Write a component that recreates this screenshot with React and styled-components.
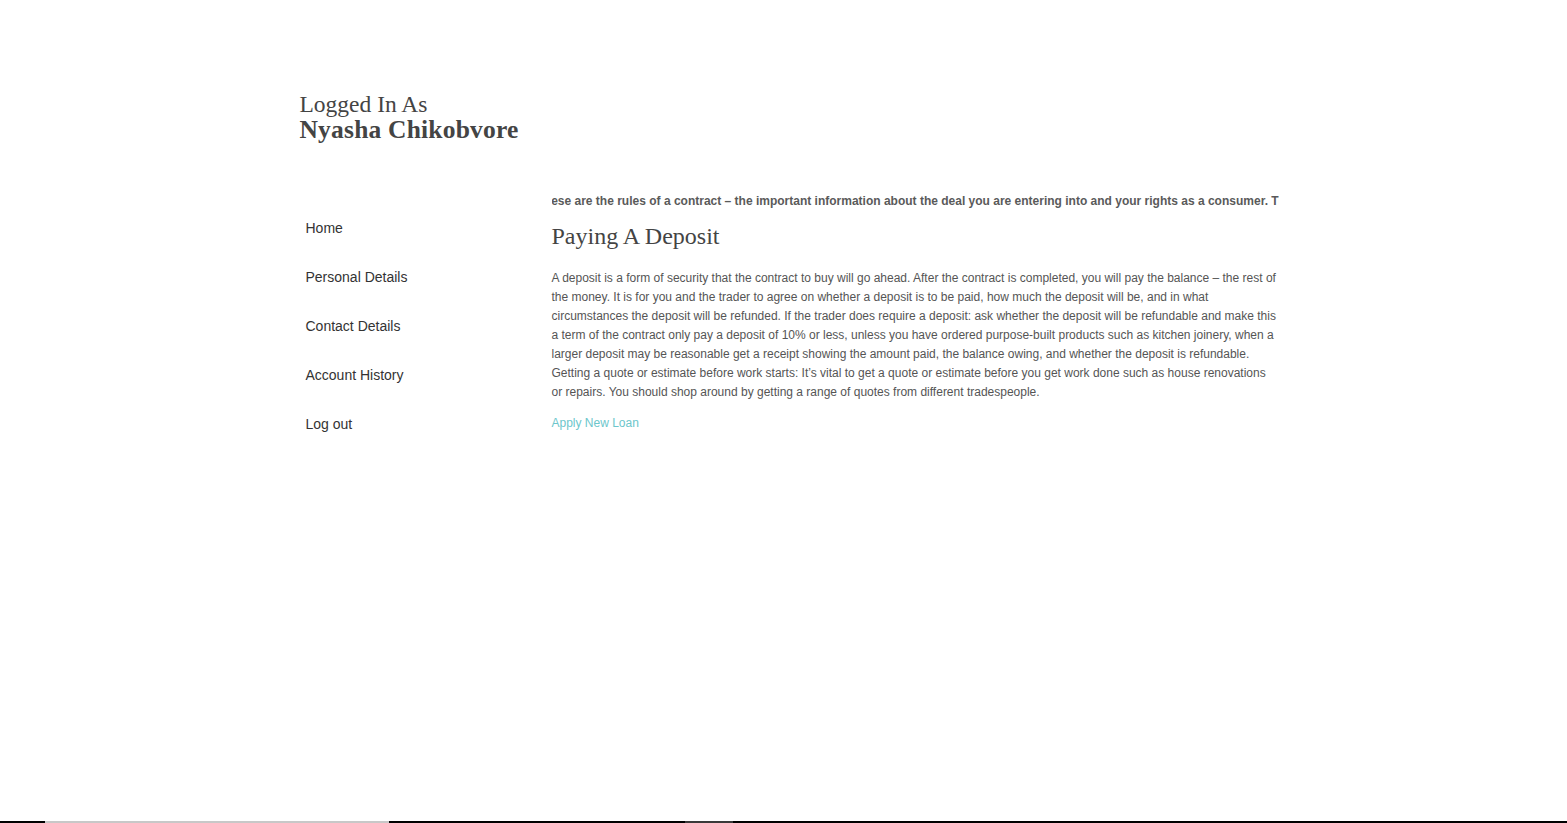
import React from "react";
import styled, { createGlobalStyle } from "styled-components";

const GlobalStyle = createGlobalStyle`
  html, body {
    margin: 0;
    padding: 0;
    background: #fff;
  }
  body {
    font-family: "Liberation Sans", Arial, sans-serif;
    color: #555;
  }
`;

const Page = styled.div`
  min-height: 100vh;
  display: flex;
  flex-direction: column;
`;

const Wrapper = styled.div`
  flex: 1;
  width: 990px;
  margin: 0 auto;
  padding: 92px 0 0 11px;
  box-sizing: border-box;
`;

const Greeting = styled.div`
  font-family: Georgia, "Liberation Serif", serif;
  color: #444;
  font-size: 23.5px;
  line-height: 25px;
  height: 100px;
  span {
    display: block;
  }
  strong {
    display: block;
    font-size: 25.5px;
    font-weight: 700;
    letter-spacing: 0.2px;
  }
`;

const Body = styled.div`
  display: flex;
`;

const Sidebar = styled.ul`
  list-style: none;
  margin: 0;
  padding: 11px 0 0 6px;
  width: 246px;
  flex-shrink: 0;
`;

const NavItem = styled.li`
  height: 49px;
  line-height: 49px;
  a {
    font-size: 14px;
    color: #333;
    text-decoration: none;
  }
`;

const Content = styled.div`
  flex: 1;
  min-width: 0;
`;

const Ticker = styled.div`
  overflow: hidden;
  white-space: nowrap;
  font-size: 12px;
  line-height: 18px;
  font-weight: 700;
  color: #5a5a5a;
  span {
    display: inline-block;
    margin-left: -15px;
  }
`;

const Title = styled.h2`
  font-family: Georgia, "Liberation Serif", serif;
  font-weight: 400;
  color: #444;
  font-size: 24px;
  line-height: 26px;
  margin: 13px 0 20px;
`;

const Text = styled.p`
  font-size: 12px;
  line-height: 19px;
  margin: 0 0 11px;
  color: #555;
`;

const LoanLink = styled.a`
  display: block;
  font-size: 12px;
  line-height: 20px;
  color: #6cc6cb;
  text-decoration: none;
`;

const Strip = styled.div`
  display: flex;
  height: 2px;
  background: #000;
`;

const Segment = styled.div`
  width: ${(p) => p.$w}px;
  margin-left: ${(p) => p.$at}px;
  background: ${(p) => p.$c};
`;

const navLinks = ["Home", "Personal Details", "Contact Details", "Account History", "Log out"];

export default function App() {
  return (
    <Page>
      <GlobalStyle />
      <Wrapper>
        <Greeting>
          <span>Logged In As</span>
          <strong>Nyasha Chikobvore</strong>
        </Greeting>
        <Body>
          <Sidebar>
            {navLinks.map((l) => (
              <NavItem key={l}>
                <a href="#">{l}</a>
              </NavItem>
            ))}
          </Sidebar>
          <Content>
            <Ticker>
              <span>
                These are the rules of a contract – the important information about the deal you are entering into and your rights as a consumer. They
              </span>
            </Ticker>
            <Title>Paying A Deposit</Title>
            <Text>
              A deposit is a form of security that the contract to buy will go ahead. After the contract is completed, you will pay the balance – the rest of the money. It is for you and the trader to agree on whether a deposit is to be paid, how much the deposit will be, and in what circumstances the deposit will be refunded. If the trader does require a deposit: ask whether the deposit will be refundable and make this a term of the contract only pay a deposit of 10% or less, unless you have ordered purpose-built products such as kitchen joinery, when a larger deposit may be reasonable get a receipt showing the amount paid, the balance owing, and whether the deposit is refundable. Getting a quote or estimate before work starts: It’s vital to get a quote or estimate before you get work done such as house renovations or repairs. You should shop around by getting a range of quotes from different tradespeople.
            </Text>
            <LoanLink href="#">Apply New Loan</LoanLink>
          </Content>
        </Body>
      </Wrapper>
      <Strip>
        <Segment $at={45} $w={344} $c="#c8c8c8" />
        <Segment $at={296} $w={48} $c="#3a3a3a" />
      </Strip>
    </Page>
  );
}
